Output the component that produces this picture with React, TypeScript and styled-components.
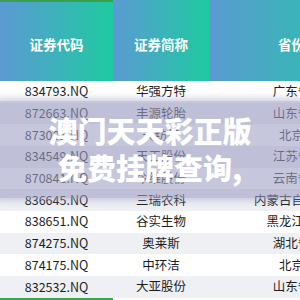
import { FC } from "react";
import styled, { createGlobalStyle } from "styled-components";

interface StockRow {
  code: string;
  name: string;
  province: string;
}

const rows: StockRow[] = [
  { code: "834793.NQ", name: "华强方特", province: "广东省" },
  { code: "872663.NQ", name: "丰源轮胎", province: "山东省" },
  { code: "873001.NQ", name: "天纺标", province: "北京" },
  { code: "834549.NQ", name: "天工股份", province: "江苏省" },
  { code: "870841.NQ", name: "今维股份", province: "云南省" },
  { code: "836645.NQ", name: "三瑞农科", province: "内蒙古自治区" },
  { code: "838651.NQ", name: "谷实生物", province: "黑龙江省" },
  { code: "874275.NQ", name: "奥莱斯", province: "湖北省" },
  { code: "874175.NQ", name: "中环洁", province: "北京" },
  { code: "832532.NQ", name: "大亚股份", province: "山东省" },
];

const headers = ["证券代码", "证券简称", "省份"];

const App: FC = () => {
  return (
    <>
      <GlobalStyle />
      <Page>
        <Table>
          {headers.map((h, i) => (
            <HeaderCell key={h} $accent={i === 0}>
              {h}
            </HeaderCell>
          ))}
          {rows.map((r, idx) => (
            <Row key={r.code} $striped={idx % 2 === 1}>
              <Cell $accent={idx === rows.length - 1}>{r.code}</Cell>
              <Cell>{r.name}</Cell>
              <Cell>{r.province}</Cell>
            </Row>
          ))}
        </Table>
        <Banner>
          <span>澳门天天彩正版</span>
          <span>免费挂牌查询,</span>
        </Banner>
      </Page>
    </>
  );
};

const GlobalStyle = createGlobalStyle`
  body {
    margin: 0;
    font-family: "Noto Sans CJK SC", "Noto Sans", sans-serif;
    background: #fff;
  }
`;

const Page = styled.div`
  position: relative;
  width: 300px;
  height: 300px;
  overflow: hidden;
`;

const Table = styled.div`
  display: grid;
  grid-template-columns: 113px 96px 165px;
  grid-template-rows: 81px;
  grid-auto-rows: 21.67px;
  width: 374px;
`;

const HeaderCell = styled.div<{ $accent?: boolean }>`
  box-sizing: border-box;
  display: flex;
  align-items: center;
  justify-content: center;
  padding-top: 4px;
  background: linear-gradient(to right, #5b9ad4, #1ecaa0);
  border-top: 2px solid ${({ $accent }) => ($accent ? "#3c9f50" : "transparent")};
  color: #fff;
  font-size: 13.5px;
  font-weight: 700;
`;

const Row = styled.div<{ $striped?: boolean }>`
  display: contents;
  > div {
    background: ${({ $striped }) => ($striped ? "#eef0f4" : "#fff")};
  }
`;

const Cell = styled.div<{ $accent?: boolean }>`
  box-sizing: border-box;
  display: flex;
  align-items: center;
  justify-content: center;
  color: #1c1c1c;
  font-size: 12.5px;
  white-space: nowrap;
  border-bottom: 2px solid ${({ $accent }) => ($accent ? "#3aa64a" : "transparent")};
  margin-bottom: ${({ $accent }) => ($accent ? "-2px" : "0")};
`;

const Banner = styled.div`
  position: absolute;
  left: 0;
  right: 0;
  top: 101px;
  height: 97px;
  display: flex;
  flex-direction: column;
  align-items: center;
  justify-content: center;
  background: rgba(160, 160, 196, 0.6);
  box-shadow: 0 0 6px 3px rgba(160, 160, 196, 0.45);
  color: #fff;
  font-size: 29px;
  font-weight: 900;
  line-height: 37px;
  padding-bottom: 2px;
  box-sizing: border-box;
`;

export default App;
